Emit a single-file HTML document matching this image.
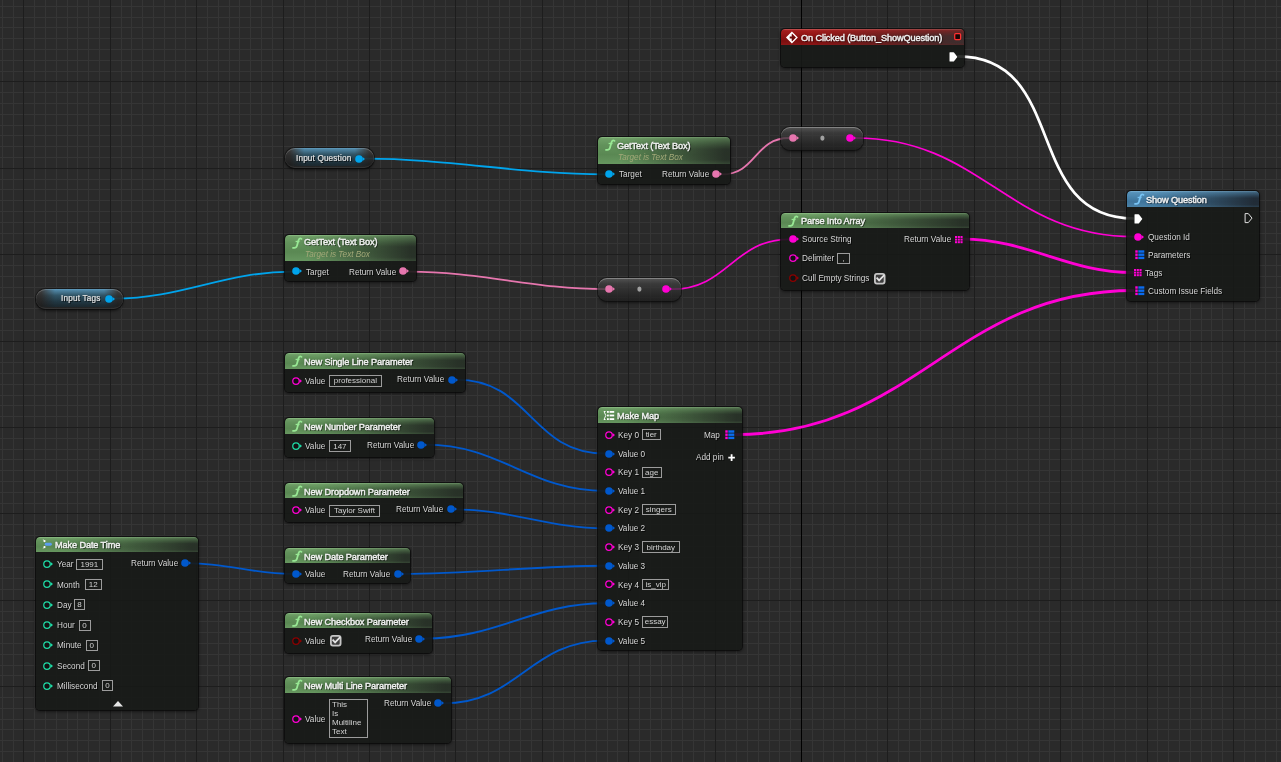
<!DOCTYPE html><html><head><meta charset="utf-8"><style>
html,body{margin:0;padding:0;background:#2a2a2a;width:1281px;height:762px;overflow:hidden;font-family:"Liberation Sans",sans-serif}
.abs{position:absolute;left:0;top:0;overflow:visible}
.t{position:absolute;white-space:nowrap;will-change:transform}
.node{position:absolute;border-radius:4px;background:rgba(23,25,23,.90);box-shadow:0 0 0 1px rgba(8,8,8,.7),0 1px 3px 1px rgba(0,0,0,.45);overflow:hidden}
.hd{position:absolute;left:0;top:0;right:0;border-radius:4px 4px 0 0;overflow:hidden}
.sh{position:absolute;left:0;top:0;right:0;bottom:0;-webkit-mask-image:linear-gradient(180deg,rgba(0,0,0,.35) 0%,#000 45%,#000 85%,rgba(0,0,0,.8) 100%)}
.pill{position:absolute;overflow:hidden;box-shadow:0 0 0 1px rgba(10,10,10,.55),0 2px 3px rgba(0,0,0,.55), inset 0 1px 0 rgba(255,255,255,.22), inset 0 -1px 0 rgba(255,255,255,.06)}
.var{background:linear-gradient(180deg,rgba(68,68,68,.92) 0%,rgba(44,44,44,.9) 40%,rgba(30,30,30,.9) 85%,rgba(40,40,40,.9) 100%)}
.band{position:absolute;left:6%;right:6%;top:0;bottom:2px;background:linear-gradient(180deg,rgba(90,160,200,.85) 0%,rgba(50,110,140,.6) 35%,rgba(30,75,98,.5) 70%,rgba(22,50,64,.45) 100%);-webkit-mask-image:linear-gradient(90deg,transparent 0%,#000 18%,#000 82%,transparent 100%);mask-image:linear-gradient(90deg,transparent 0%,#000 18%,#000 82%,transparent 100%)}
.conv{background:linear-gradient(180deg,rgba(92,92,92,.85) 0%,rgba(62,62,62,.78) 25%,rgba(38,38,38,.74) 75%,rgba(30,30,30,.78) 100%);box-shadow:0 0 0 1px rgba(10,10,10,.5),0 2px 3px rgba(0,0,0,.5), inset 0 1px 0 rgba(255,255,255,.28)}
.tb{position:absolute;box-sizing:border-box;border:1px solid #9c9c9c}
</style></head><body><svg class="abs" width="1281" height="762" viewBox="0 0 1281 762" shape-rendering="crispEdges"><path fill="#353535" d="M2 0h1v762h-1zM13 0h1v762h-1zM34 0h1v762h-1zM45 0h1v762h-1zM56 0h1v762h-1zM67 0h1v762h-1zM77 0h1v762h-1zM88 0h1v762h-1zM99 0h1v762h-1zM121 0h1v762h-1zM131 0h1v762h-1zM142 0h1v762h-1zM153 0h1v762h-1zM164 0h1v762h-1zM175 0h1v762h-1zM185 0h1v762h-1zM207 0h1v762h-1zM218 0h1v762h-1zM229 0h1v762h-1zM239 0h1v762h-1zM250 0h1v762h-1zM261 0h1v762h-1zM272 0h1v762h-1zM293 0h1v762h-1zM304 0h1v762h-1zM315 0h1v762h-1zM326 0h1v762h-1zM337 0h1v762h-1zM347 0h1v762h-1zM358 0h1v762h-1zM380 0h1v762h-1zM391 0h1v762h-1zM401 0h1v762h-1zM412 0h1v762h-1zM423 0h1v762h-1zM434 0h1v762h-1zM445 0h1v762h-1zM466 0h1v762h-1zM477 0h1v762h-1zM488 0h1v762h-1zM499 0h1v762h-1zM509 0h1v762h-1zM520 0h1v762h-1zM531 0h1v762h-1zM553 0h1v762h-1zM563 0h1v762h-1zM574 0h1v762h-1zM585 0h1v762h-1zM596 0h1v762h-1zM607 0h1v762h-1zM617 0h1v762h-1zM639 0h1v762h-1zM650 0h1v762h-1zM661 0h1v762h-1zM671 0h1v762h-1zM682 0h1v762h-1zM693 0h1v762h-1zM704 0h1v762h-1zM725 0h1v762h-1zM736 0h1v762h-1zM747 0h1v762h-1zM758 0h1v762h-1zM769 0h1v762h-1zM779 0h1v762h-1zM790 0h1v762h-1zM812 0h1v762h-1zM823 0h1v762h-1zM833 0h1v762h-1zM844 0h1v762h-1zM855 0h1v762h-1zM866 0h1v762h-1zM877 0h1v762h-1zM898 0h1v762h-1zM909 0h1v762h-1zM920 0h1v762h-1zM931 0h1v762h-1zM941 0h1v762h-1zM952 0h1v762h-1zM963 0h1v762h-1zM985 0h1v762h-1zM995 0h1v762h-1zM1006 0h1v762h-1zM1017 0h1v762h-1zM1028 0h1v762h-1zM1039 0h1v762h-1zM1049 0h1v762h-1zM1071 0h1v762h-1zM1082 0h1v762h-1zM1093 0h1v762h-1zM1103 0h1v762h-1zM1114 0h1v762h-1zM1125 0h1v762h-1zM1136 0h1v762h-1zM1157 0h1v762h-1zM1168 0h1v762h-1zM1179 0h1v762h-1zM1190 0h1v762h-1zM1201 0h1v762h-1zM1211 0h1v762h-1zM1222 0h1v762h-1zM1244 0h1v762h-1zM1255 0h1v762h-1zM1265 0h1v762h-1zM1276 0h1v762h-1zM0 6h1281v1h-1281zM0 17h1281v1h-1281zM0 27h1281v1h-1281zM0 38h1281v1h-1281zM0 49h1281v1h-1281zM0 60h1281v1h-1281zM0 71h1281v1h-1281zM0 92h1281v1h-1281zM0 103h1281v1h-1281zM0 114h1281v1h-1281zM0 125h1281v1h-1281zM0 135h1281v1h-1281zM0 146h1281v1h-1281zM0 157h1281v1h-1281zM0 179h1281v1h-1281zM0 189h1281v1h-1281zM0 200h1281v1h-1281zM0 211h1281v1h-1281zM0 222h1281v1h-1281zM0 233h1281v1h-1281zM0 243h1281v1h-1281zM0 265h1281v1h-1281zM0 276h1281v1h-1281zM0 287h1281v1h-1281zM0 297h1281v1h-1281zM0 308h1281v1h-1281zM0 319h1281v1h-1281zM0 330h1281v1h-1281zM0 351h1281v1h-1281zM0 362h1281v1h-1281zM0 373h1281v1h-1281zM0 384h1281v1h-1281zM0 395h1281v1h-1281zM0 405h1281v1h-1281zM0 416h1281v1h-1281zM0 438h1281v1h-1281zM0 449h1281v1h-1281zM0 459h1281v1h-1281zM0 470h1281v1h-1281zM0 481h1281v1h-1281zM0 492h1281v1h-1281zM0 503h1281v1h-1281zM0 524h1281v1h-1281zM0 535h1281v1h-1281zM0 546h1281v1h-1281zM0 557h1281v1h-1281zM0 567h1281v1h-1281zM0 578h1281v1h-1281zM0 589h1281v1h-1281zM0 611h1281v1h-1281zM0 621h1281v1h-1281zM0 632h1281v1h-1281zM0 643h1281v1h-1281zM0 654h1281v1h-1281zM0 665h1281v1h-1281zM0 675h1281v1h-1281zM0 697h1281v1h-1281zM0 708h1281v1h-1281zM0 719h1281v1h-1281zM0 729h1281v1h-1281zM0 740h1281v1h-1281zM0 751h1281v1h-1281z"/><path fill="#1d1d1d" d="M23 0h1v762h-1zM110 0h1v762h-1zM196 0h1v762h-1zM283 0h1v762h-1zM369 0h1v762h-1zM455 0h1v762h-1zM542 0h1v762h-1zM628 0h1v762h-1zM715 0h1v762h-1zM887 0h1v762h-1zM974 0h1v762h-1zM1060 0h1v762h-1zM1147 0h1v762h-1zM1233 0h1v762h-1zM0 81h1281v1h-1281zM0 168h1281v1h-1281zM0 254h1281v1h-1281zM0 341h1281v1h-1281zM0 427h1281v1h-1281zM0 513h1281v1h-1281zM0 600h1281v1h-1281zM0 686h1281v1h-1281z"/><path fill="#000" d="M801 0h1v762h-1z"/></svg><svg class="abs" width="1281" height="762" viewBox="0 0 1281 762"><path d="M957.5 56.4C1070.37 56.4 1021.13 218.5 1134 218.5" stroke="#ffffff" stroke-width="2.7" fill="none"/><path d="M364.5 158.6C449.93 158.6 519.57 174.4 605 174.4" stroke="#00a4ec" stroke-width="1.8" fill="none"/><path d="M722 174.4C756.47 174.4 754.53 138 789 138" stroke="#e676ae" stroke-width="1.8" fill="none"/><path d="M855.5 138C981.2 138 1008.3 236.6 1134 236.6" stroke="#ff00d4" stroke-width="1.7" fill="none"/><path d="M114 298.7C182.33 298.7 223.67 271.7 292 271.7" stroke="#00a4ec" stroke-width="1.8" fill="none"/><path d="M409 271.7C480.17 271.7 533.83 289.2 605 289.2" stroke="#e676ae" stroke-width="1.8" fill="none"/><path d="M672 289.2C727.6 289.2 733.4 239.4 789 239.4" stroke="#ff00d4" stroke-width="1.7" fill="none"/><path d="M962 239.2C1030.43 239.2 1065.57 272.5 1134 272.5" stroke="#ff00d4" stroke-width="2.8" fill="none"/><path d="M735 434.6C916.03 434.6 952.97 290.5 1134 290.5" stroke="#ff00d4" stroke-width="2.8" fill="none"/><path d="M456.5 379.6C530.64 379.6 530.86 453.51 605 453.51" stroke="#0058cc" stroke-width="1.9" fill="none"/><path d="M425.7 444.6C500.91 444.6 529.79 490.93 605 490.93" stroke="#0058cc" stroke-width="1.9" fill="none"/><path d="M454.8 509.4C511.18 509.4 548.62 528.35 605 528.35" stroke="#0058cc" stroke-width="1.9" fill="none"/><path d="M402 573.9C472.38 573.9 534.62 565.77 605 565.77" stroke="#0058cc" stroke-width="1.9" fill="none"/><path d="M424.6 638.5C496.5 638.5 533.1 603.19 605 603.19" stroke="#0058cc" stroke-width="1.9" fill="none"/><path d="M443.3 703.4C518.13 703.4 530.17 640.61 605 640.61" stroke="#0058cc" stroke-width="1.9" fill="none"/><path d="M189.6 563.4C227.23 563.4 254.37 573.9 292 573.9" stroke="#0058cc" stroke-width="1.9" fill="none"/></svg><div class="node" style="left:781px;top:29px;width:183px;height:38px"><div class="hd" style="height:16px;background:linear-gradient(180deg, rgba(240,150,150,.5) 0, rgba(240,150,150,0) 1.6px), linear-gradient(180deg,#a82020 0%,#931515 40%,#7c0f0f 75%,#8c1616 100%)"><div class="sh" style="background:linear-gradient(90deg,rgba(0,0,0,0) 18%,rgba(58,48,48,.92) 96%)"></div></div></div><svg class="abs" style="left:786.2px;top:32px" width="12" height="12" viewBox="0 0 12 12"><path d="M0.9 5.5L5.9 0.5L10.9 5.5L5.9 10.5Z" fill="none" stroke="#fff" stroke-width="1.35" stroke-linejoin="miter"/><path d="M0.9 5.5L5.9 0.5V10.5Z" fill="#fff"/><rect x="3.7" y="4.5" width="2.3" height="2" fill="#6e0c0c"/><path d="M5.8 2L9.3 5.5L5.8 9Z" fill="#6e0c0c"/></svg><div class="t" style="left:801.2px;top:33.81px;font-size:9.2px;line-height:9.2px;color:#f2f2f2;letter-spacing:-0.12px;-webkit-text-stroke:0.4px #f2f2f2;text-shadow:1px 1px 0 rgba(0,0,0,.55),0 0 3px rgba(0,0,0,.45);">On Clicked (Button_ShowQuestion)</div><svg class="abs" style="left:953.6px;top:32.8px" width="8" height="8" viewBox="0 0 8 8"><rect x="0.7" y="0.7" width="5.9" height="5.9" rx="1" fill="#1a0606" stroke="#ff3030" stroke-width="1.3"/></svg><svg class="abs" style="left:949px;top:51.5px" width="10" height="10" viewBox="0 0 10 10"><path d="M1 0.3H4.3Q4.7 0.3 5 0.6L8.1 4.5Q8.4 4.9 8.1 5.3L5 9.2Q4.7 9.5 4.3 9.5H1Q0.5 9.5 0.5 9V0.8Q0.5 0.3 1 0.3Z" fill="#fff"/></svg><div class="node" style="left:1127px;top:191px;width:132px;height:110px"><div class="hd" style="height:16px;background:linear-gradient(180deg, rgba(160,210,240,.5) 0, rgba(160,210,240,0) 1.6px), linear-gradient(180deg,#5b96bd 0%,#4b85ad 35%,#3f759c 65%,#4a82a8 100%)"><div class="sh" style="background:linear-gradient(90deg,rgba(0,0,0,0) 18%,rgba(30,36,44,.9) 96%)"></div></div></div><svg class="abs" style="left:1131px;top:191px" width="18" height="18" viewBox="0 0 18 18"><path d="M12.5 3.9C11.3 2.9 10.1 3.4 9.5 5.2L7.9 10.9C7.5 12.5 6.2 13.2 4.0 12.8" fill="none" stroke="#78c4f4" stroke-width="1.8" stroke-linecap="round"/><path d="M6.6 6.5H10.5" stroke="#78c4f4" stroke-width="1.3"/></svg><div class="t" style="left:1146px;top:196.01px;font-size:9.2px;line-height:9.2px;color:#f2f2f2;letter-spacing:-0.12px;-webkit-text-stroke:0.4px #f2f2f2;text-shadow:1px 1px 0 rgba(0,0,0,.55),0 0 3px rgba(0,0,0,.45);">Show Question</div><svg class="abs" style="left:1133.5px;top:213.5px" width="10" height="10" viewBox="0 0 10 10"><path d="M1 0.3H4.3Q4.7 0.3 5 0.6L8.1 4.5Q8.4 4.9 8.1 5.3L5 9.2Q4.7 9.5 4.3 9.5H1Q0.5 9.5 0.5 9V0.8Q0.5 0.3 1 0.3Z" fill="#fff"/></svg><svg class="abs" style="left:1244px;top:213px" width="10" height="10" viewBox="0 0 10 10"><path d="M1.1 0.6H4.3L8 5.1L4.3 9.6H1.1Z" fill="none" stroke="#e0e0e0" stroke-width="1.0" stroke-linejoin="round"/></svg><svg class="abs" style="left:1132.6px;top:231.6px" width="12" height="10" viewBox="0 0 12 10"><circle cx="5" cy="5" r="3.8" fill="#ff00d4"/><path d="M8.6 3L11 5L8.6 7Z" fill="#ff00d4"/></svg><div class="t" style="left:1148px;top:233.66px;font-size:8.2px;line-height:8.2px;color:#d6d6d6;text-shadow:1px 1px 0 rgba(0,0,0,.75);">Question Id</div><svg class="abs" style="left:1134.5px;top:249.8px" width="10" height="10" viewBox="0 0 10 10"><rect x="0.3" y="0.3" width="2.4" height="2.4" fill="#ff00d4"/><rect x="3.3" y="0.3" width="6" height="2.4" fill="#0a6cf0"/><rect x="0.3" y="3.5" width="2.4" height="2.4" fill="#ff00d4"/><rect x="3.3" y="3.5" width="6" height="2.4" fill="#0a6cf0"/><rect x="0.3" y="6.7" width="2.4" height="2.4" fill="#ff00d4"/><rect x="3.3" y="6.7" width="6" height="2.4" fill="#0a6cf0"/></svg><div class="t" style="left:1148px;top:251.56px;font-size:8.2px;line-height:8.2px;color:#d6d6d6;text-shadow:1px 1px 0 rgba(0,0,0,.75);">Parameters</div><svg class="abs" style="left:1133.8px;top:268.9px" width="9" height="8" viewBox="0 0 9 8"><rect x="0" y="0" width="2.1" height="2" fill="#ff00d4"/><rect x="2.75" y="0" width="2.1" height="2" fill="#ff00d4"/><rect x="5.5" y="0" width="2.1" height="2" fill="#ff00d4"/><rect x="0" y="2.6" width="2.1" height="2" fill="#ff00d4"/><rect x="2.75" y="2.6" width="2.1" height="2" fill="#ff00d4"/><rect x="5.5" y="2.6" width="2.1" height="2" fill="#ff00d4"/><rect x="0" y="5.2" width="2.1" height="2" fill="#ff00d4"/><rect x="2.75" y="5.2" width="2.1" height="2" fill="#ff00d4"/><rect x="5.5" y="5.2" width="2.1" height="2" fill="#ff00d4"/></svg><div class="t" style="left:1145px;top:269.56px;font-size:8.2px;line-height:8.2px;color:#d6d6d6;text-shadow:1px 1px 0 rgba(0,0,0,.75);">Tags</div><svg class="abs" style="left:1134.5px;top:286px" width="10" height="10" viewBox="0 0 10 10"><rect x="0.3" y="0.3" width="2.4" height="2.4" fill="#ff00d4"/><rect x="3.3" y="0.3" width="6" height="2.4" fill="#0a6cf0"/><rect x="0.3" y="3.5" width="2.4" height="2.4" fill="#ff00d4"/><rect x="3.3" y="3.5" width="6" height="2.4" fill="#0a6cf0"/><rect x="0.3" y="6.7" width="2.4" height="2.4" fill="#ff00d4"/><rect x="3.3" y="6.7" width="6" height="2.4" fill="#0a6cf0"/></svg><div class="t" style="left:1148px;top:287.56px;font-size:8.2px;line-height:8.2px;color:#d6d6d6;text-shadow:1px 1px 0 rgba(0,0,0,.75);">Custom Issue Fields</div><div class="pill var" style="left:285px;top:148px;width:89px;height:20.3px;border-radius:10.15px"><div class="band"></div></div><div class="t" style="left:296.2px;top:154.96px;font-size:8.2px;line-height:8.2px;color:#e2e2e2;letter-spacing:0.15px;text-shadow:1px 1px 0 rgba(0,0,0,.75);-webkit-text-stroke:0.2px #e2e2e2;">Input Question</div><svg class="abs" style="left:353.6px;top:153.6px" width="12" height="10" viewBox="0 0 12 10"><circle cx="5" cy="5" r="3.8" fill="#00a4ec"/><path d="M8.6 3L11 5L8.6 7Z" fill="#00a4ec"/></svg><div class="node" style="left:598px;top:137px;width:132px;height:47px"><div class="hd" style="height:27px;background:linear-gradient(180deg, rgba(170,220,160,.5) 0, rgba(170,220,160,0) 1.6px), linear-gradient(180deg,#72a26a 0%,#62925b 30%,#5a8853 65%,#679760 100%)"><div class="sh" style="background:linear-gradient(90deg,rgba(0,0,0,0) 18%,rgba(36,42,36,.92) 96%)"></div></div></div><svg class="abs" style="left:602px;top:137px" width="18" height="18" viewBox="0 0 18 18"><path d="M12.5 3.9C11.3 2.9 10.1 3.4 9.5 5.2L7.9 10.9C7.5 12.5 6.2 13.2 4.0 12.8" fill="none" stroke="#98e894" stroke-width="1.8" stroke-linecap="round"/><path d="M6.6 6.5H10.5" stroke="#98e894" stroke-width="1.3"/></svg><div class="t" style="left:617.2px;top:141.51px;font-size:9.2px;line-height:9.2px;color:#f2f2f2;letter-spacing:-0.12px;-webkit-text-stroke:0.4px #f2f2f2;text-shadow:1px 1px 0 rgba(0,0,0,.55),0 0 3px rgba(0,0,0,.45);">GetText (Text Box)</div><div class="t" style="left:618px;top:153.66px;font-size:8.2px;line-height:8.2px;color:#a2a878;font-style:italic;">Target is Text Box</div><svg class="abs" style="left:603.6px;top:169.4px" width="12" height="10" viewBox="0 0 12 10"><circle cx="5" cy="5" r="3.8" fill="#00a4ec"/><path d="M8.6 3L11 5L8.6 7Z" fill="#00a4ec"/></svg><div class="t" style="left:618.5px;top:171.46px;font-size:8.2px;line-height:8.2px;color:#d6d6d6;text-shadow:1px 1px 0 rgba(0,0,0,.75);">Target</div><div class="t" style="right:571.6px;top:171.46px;font-size:8.2px;line-height:8.2px;color:#d6d6d6;text-shadow:1px 1px 0 rgba(0,0,0,.75)">Return Value</div><svg class="abs" style="left:711px;top:169.4px" width="12" height="10" viewBox="0 0 12 10"><circle cx="5" cy="5" r="3.8" fill="#e676ae"/><path d="M8.6 3L11 5L8.6 7Z" fill="#e676ae"/></svg><div class="pill conv" style="left:781px;top:127px;width:82px;height:23px;border-radius:9px"></div><svg class="abs" style="left:788.2px;top:133px" width="12" height="10" viewBox="0 0 12 10"><circle cx="5" cy="5" r="3.8" fill="#e676ae"/><path d="M8.6 3L11 5L8.6 7Z" fill="#e676ae"/></svg><svg class="abs" style="left:819.6px;top:135px" width="5" height="6" viewBox="0 0 5 6"><ellipse cx="2.4" cy="3.1" rx="2.1" ry="2.6" fill="#a0a0a0"/></svg><svg class="abs" style="left:844.7px;top:133px" width="12" height="10" viewBox="0 0 12 10"><circle cx="5" cy="5" r="3.8" fill="#ff00d4"/><path d="M8.6 3L11 5L8.6 7Z" fill="#ff00d4"/></svg><div class="node" style="left:781px;top:213px;width:188px;height:77px"><div class="hd" style="height:15px;background:linear-gradient(180deg, rgba(170,220,160,.5) 0, rgba(170,220,160,0) 1.6px), linear-gradient(180deg,#72a26a 0%,#62925b 30%,#5a8853 65%,#679760 100%)"><div class="sh" style="background:linear-gradient(90deg,rgba(0,0,0,0) 18%,rgba(36,42,36,.92) 96%)"></div></div></div><svg class="abs" style="left:785px;top:213px" width="18" height="18" viewBox="0 0 18 18"><path d="M12.5 3.9C11.3 2.9 10.1 3.4 9.5 5.2L7.9 10.9C7.5 12.5 6.2 13.2 4.0 12.8" fill="none" stroke="#98e894" stroke-width="1.8" stroke-linecap="round"/><path d="M6.6 6.5H10.5" stroke="#98e894" stroke-width="1.3"/></svg><div class="t" style="left:801.1px;top:217.21px;font-size:9.2px;line-height:9.2px;color:#f2f2f2;letter-spacing:-0.12px;-webkit-text-stroke:0.4px #f2f2f2;text-shadow:1px 1px 0 rgba(0,0,0,.55),0 0 3px rgba(0,0,0,.45);">Parse Into Array</div><svg class="abs" style="left:787.5px;top:234.4px" width="12" height="10" viewBox="0 0 12 10"><circle cx="5" cy="5" r="3.8" fill="#ff00d4"/><path d="M8.6 3L11 5L8.6 7Z" fill="#ff00d4"/></svg><div class="t" style="left:802.3px;top:236.46px;font-size:8.2px;line-height:8.2px;color:#d6d6d6;text-shadow:1px 1px 0 rgba(0,0,0,.75);">Source String</div><div class="t" style="right:329.9px;top:236.46px;font-size:8.2px;line-height:8.2px;color:#d6d6d6;text-shadow:1px 1px 0 rgba(0,0,0,.75)">Return Value</div><svg class="abs" style="left:954.5px;top:235.5px" width="9" height="8" viewBox="0 0 9 8"><rect x="0" y="0" width="2.1" height="2" fill="#ff00d4"/><rect x="2.75" y="0" width="2.1" height="2" fill="#ff00d4"/><rect x="5.5" y="0" width="2.1" height="2" fill="#ff00d4"/><rect x="0" y="2.6" width="2.1" height="2" fill="#ff00d4"/><rect x="2.75" y="2.6" width="2.1" height="2" fill="#ff00d4"/><rect x="5.5" y="2.6" width="2.1" height="2" fill="#ff00d4"/><rect x="0" y="5.2" width="2.1" height="2" fill="#ff00d4"/><rect x="2.75" y="5.2" width="2.1" height="2" fill="#ff00d4"/><rect x="5.5" y="5.2" width="2.1" height="2" fill="#ff00d4"/></svg><svg class="abs" style="left:787.5px;top:252.8px" width="12" height="10" viewBox="0 0 12 10"><circle cx="5" cy="5" r="3.25" fill="#121212" stroke="#ff00d4" stroke-width="1.25"/><path d="M8.6 3L11 5L8.6 7Z" fill="#ff00d4"/></svg><div class="t" style="left:802.3px;top:254.86px;font-size:8.2px;line-height:8.2px;color:#d6d6d6;text-shadow:1px 1px 0 rgba(0,0,0,.75);">Delimiter</div><div class="tb" style="left:837px;top:252.5px;width:13px;height:11.2px"></div><div class="t" style="left:837px;width:13px;text-align:center;top:254.63px;font-size:8.0px;line-height:8.0px;color:#d2d2d2">,</div><svg class="abs" style="left:787.5px;top:273.4px" width="12" height="10" viewBox="0 0 12 10"><circle cx="5" cy="5" r="3.25" fill="#121212" stroke="#8c0000" stroke-width="1.25"/><path d="M8.6 3L11 5L8.6 7Z" fill="#8c0000"/></svg><div class="t" style="left:802.3px;top:275.46px;font-size:8.2px;line-height:8.2px;color:#d6d6d6;text-shadow:1px 1px 0 rgba(0,0,0,.75);">Cull Empty Strings</div><svg class="abs" style="left:874px;top:272.6px" width="11.5" height="11.5" viewBox="0 0 11.5 11.5"><rect x="0.9" y="0.9" width="9.7" height="9.7" rx="2" fill="#3e3e3e" stroke="#c6c6c6" stroke-width="1.8"/><path d="M2.6 4.6L5.1 7.4L10.2 2.1" fill="none" stroke="#e4e4e4" stroke-width="1.7"/></svg><div class="pill var" style="left:36px;top:289px;width:87.3px;height:19.5px;border-radius:9.75px"><div class="band"></div></div><div class="t" style="left:61.2px;top:295.16px;font-size:8.2px;line-height:8.2px;color:#e2e2e2;letter-spacing:0.2px;text-shadow:1px 1px 0 rgba(0,0,0,.75);-webkit-text-stroke:0.2px #e2e2e2;">Input Tags</div><svg class="abs" style="left:103.7px;top:293.7px" width="12" height="10" viewBox="0 0 12 10"><circle cx="5" cy="5" r="3.8" fill="#00a4ec"/><path d="M8.6 3L11 5L8.6 7Z" fill="#00a4ec"/></svg><div class="node" style="left:285px;top:235px;width:131px;height:46px"><div class="hd" style="height:26px;background:linear-gradient(180deg, rgba(170,220,160,.5) 0, rgba(170,220,160,0) 1.6px), linear-gradient(180deg,#72a26a 0%,#62925b 30%,#5a8853 65%,#679760 100%)"><div class="sh" style="background:linear-gradient(90deg,rgba(0,0,0,0) 18%,rgba(36,42,36,.92) 96%)"></div></div></div><svg class="abs" style="left:289px;top:235px" width="18" height="18" viewBox="0 0 18 18"><path d="M12.5 3.9C11.3 2.9 10.1 3.4 9.5 5.2L7.9 10.9C7.5 12.5 6.2 13.2 4.0 12.8" fill="none" stroke="#98e894" stroke-width="1.8" stroke-linecap="round"/><path d="M6.6 6.5H10.5" stroke="#98e894" stroke-width="1.3"/></svg><div class="t" style="left:304.3px;top:238.41px;font-size:9.2px;line-height:9.2px;color:#f2f2f2;letter-spacing:-0.12px;-webkit-text-stroke:0.4px #f2f2f2;text-shadow:1px 1px 0 rgba(0,0,0,.55),0 0 3px rgba(0,0,0,.45);">GetText (Text Box)</div><div class="t" style="left:305px;top:250.56px;font-size:8.2px;line-height:8.2px;color:#a2a878;font-style:italic;">Target is Text Box</div><svg class="abs" style="left:290.8px;top:266.4px" width="12" height="10" viewBox="0 0 12 10"><circle cx="5" cy="5" r="3.8" fill="#00a4ec"/><path d="M8.6 3L11 5L8.6 7Z" fill="#00a4ec"/></svg><div class="t" style="left:305.7px;top:268.76px;font-size:8.2px;line-height:8.2px;color:#d6d6d6;text-shadow:1px 1px 0 rgba(0,0,0,.75);">Target</div><div class="t" style="right:885.2px;top:268.76px;font-size:8.2px;line-height:8.2px;color:#d6d6d6;text-shadow:1px 1px 0 rgba(0,0,0,.75)">Return Value</div><svg class="abs" style="left:397.9px;top:266.4px" width="12" height="10" viewBox="0 0 12 10"><circle cx="5" cy="5" r="3.8" fill="#e676ae"/><path d="M8.6 3L11 5L8.6 7Z" fill="#e676ae"/></svg><div class="pill conv" style="left:598px;top:278px;width:82.5px;height:23px;border-radius:9px"></div><svg class="abs" style="left:603.6px;top:284.2px" width="12" height="10" viewBox="0 0 12 10"><circle cx="5" cy="5" r="3.8" fill="#e676ae"/><path d="M8.6 3L11 5L8.6 7Z" fill="#e676ae"/></svg><svg class="abs" style="left:636.6px;top:286px" width="5" height="6" viewBox="0 0 5 6"><ellipse cx="2.4" cy="3.1" rx="2.1" ry="2.6" fill="#a0a0a0"/></svg><svg class="abs" style="left:661px;top:284.2px" width="12" height="10" viewBox="0 0 12 10"><circle cx="5" cy="5" r="3.8" fill="#ff00d4"/><path d="M8.6 3L11 5L8.6 7Z" fill="#ff00d4"/></svg><div class="node" style="left:285px;top:353px;width:180px;height:39px"><div class="hd" style="height:16px;background:linear-gradient(180deg, rgba(170,220,160,.5) 0, rgba(170,220,160,0) 1.6px), linear-gradient(180deg,#72a26a 0%,#62925b 30%,#5a8853 65%,#679760 100%)"><div class="sh" style="background:linear-gradient(90deg,rgba(0,0,0,0) 18%,rgba(36,42,36,.92) 96%)"></div></div></div><svg class="abs" style="left:289px;top:353px" width="18" height="18" viewBox="0 0 18 18"><path d="M12.5 3.9C11.3 2.9 10.1 3.4 9.5 5.2L7.9 10.9C7.5 12.5 6.2 13.2 4.0 12.8" fill="none" stroke="#98e894" stroke-width="1.8" stroke-linecap="round"/><path d="M6.6 6.5H10.5" stroke="#98e894" stroke-width="1.3"/></svg><div class="t" style="left:303.9px;top:357.91px;font-size:9.2px;line-height:9.2px;color:#f2f2f2;letter-spacing:-0.12px;-webkit-text-stroke:0.4px #f2f2f2;text-shadow:1px 1px 0 rgba(0,0,0,.55),0 0 3px rgba(0,0,0,.45);">New Single Line Parameter</div><svg class="abs" style="left:291px;top:376px" width="12" height="10" viewBox="0 0 12 10"><circle cx="5" cy="5" r="3.25" fill="#121212" stroke="#ff00d4" stroke-width="1.25"/><path d="M8.6 3L11 5L8.6 7Z" fill="#ff00d4"/></svg><div class="t" style="left:305.2px;top:378.06px;font-size:8.2px;line-height:8.2px;color:#d6d6d6;text-shadow:1px 1px 0 rgba(0,0,0,.75);">Value</div><div class="tb" style="left:329.1px;top:375.2px;width:52.8px;height:11.5px"></div><div class="t" style="left:329.1px;width:52.8px;text-align:center;top:377.48px;font-size:8.0px;line-height:8.0px;color:#d2d2d2">professional</div><div class="t" style="right:836.4px;top:376.46px;font-size:8.2px;line-height:8.2px;color:#d6d6d6;text-shadow:1px 1px 0 rgba(0,0,0,.75)">Return Value</div><svg class="abs" style="left:447px;top:374.6px" width="12" height="10" viewBox="0 0 12 10"><circle cx="5" cy="5" r="3.8" fill="#0058cc"/><path d="M8.6 3L11 5L8.6 7Z" fill="#0058cc"/></svg><div class="node" style="left:285px;top:418px;width:149.3px;height:39px"><div class="hd" style="height:16px;background:linear-gradient(180deg, rgba(170,220,160,.5) 0, rgba(170,220,160,0) 1.6px), linear-gradient(180deg,#72a26a 0%,#62925b 30%,#5a8853 65%,#679760 100%)"><div class="sh" style="background:linear-gradient(90deg,rgba(0,0,0,0) 18%,rgba(36,42,36,.92) 96%)"></div></div></div><svg class="abs" style="left:289px;top:418px" width="18" height="18" viewBox="0 0 18 18"><path d="M12.5 3.9C11.3 2.9 10.1 3.4 9.5 5.2L7.9 10.9C7.5 12.5 6.2 13.2 4.0 12.8" fill="none" stroke="#98e894" stroke-width="1.8" stroke-linecap="round"/><path d="M6.6 6.5H10.5" stroke="#98e894" stroke-width="1.3"/></svg><div class="t" style="left:303.9px;top:422.91px;font-size:9.2px;line-height:9.2px;color:#f2f2f2;letter-spacing:-0.12px;-webkit-text-stroke:0.4px #f2f2f2;text-shadow:1px 1px 0 rgba(0,0,0,.55),0 0 3px rgba(0,0,0,.45);">New Number Parameter</div><svg class="abs" style="left:291px;top:440.5px" width="12" height="10" viewBox="0 0 12 10"><circle cx="5" cy="5" r="3.25" fill="#121212" stroke="#1fdca6" stroke-width="1.25"/><path d="M8.6 3L11 5L8.6 7Z" fill="#1fdca6"/></svg><div class="t" style="left:305.2px;top:442.56px;font-size:8.2px;line-height:8.2px;color:#d6d6d6;text-shadow:1px 1px 0 rgba(0,0,0,.75);">Value</div><div class="tb" style="left:329.1px;top:440.3px;width:21.8px;height:11.5px"></div><div class="t" style="left:329.1px;width:21.8px;text-align:center;top:442.58px;font-size:8.0px;line-height:8.0px;color:#d2d2d2">147</div><div class="t" style="right:866.8px;top:441.66px;font-size:8.2px;line-height:8.2px;color:#d6d6d6;text-shadow:1px 1px 0 rgba(0,0,0,.75)">Return Value</div><svg class="abs" style="left:416.3px;top:439.6px" width="12" height="10" viewBox="0 0 12 10"><circle cx="5" cy="5" r="3.8" fill="#0058cc"/><path d="M8.6 3L11 5L8.6 7Z" fill="#0058cc"/></svg><div class="node" style="left:285px;top:483px;width:178.1px;height:39px"><div class="hd" style="height:15px;background:linear-gradient(180deg, rgba(170,220,160,.5) 0, rgba(170,220,160,0) 1.6px), linear-gradient(180deg,#72a26a 0%,#62925b 30%,#5a8853 65%,#679760 100%)"><div class="sh" style="background:linear-gradient(90deg,rgba(0,0,0,0) 18%,rgba(36,42,36,.92) 96%)"></div></div></div><svg class="abs" style="left:289px;top:483px" width="18" height="18" viewBox="0 0 18 18"><path d="M12.5 3.9C11.3 2.9 10.1 3.4 9.5 5.2L7.9 10.9C7.5 12.5 6.2 13.2 4.0 12.8" fill="none" stroke="#98e894" stroke-width="1.8" stroke-linecap="round"/><path d="M6.6 6.5H10.5" stroke="#98e894" stroke-width="1.3"/></svg><div class="t" style="left:303.9px;top:487.91px;font-size:9.2px;line-height:9.2px;color:#f2f2f2;letter-spacing:-0.12px;-webkit-text-stroke:0.4px #f2f2f2;text-shadow:1px 1px 0 rgba(0,0,0,.55),0 0 3px rgba(0,0,0,.45);">New Dropdown Parameter</div><svg class="abs" style="left:291px;top:505px" width="12" height="10" viewBox="0 0 12 10"><circle cx="5" cy="5" r="3.25" fill="#121212" stroke="#ff00d4" stroke-width="1.25"/><path d="M8.6 3L11 5L8.6 7Z" fill="#ff00d4"/></svg><div class="t" style="left:305.2px;top:507.06px;font-size:8.2px;line-height:8.2px;color:#d6d6d6;text-shadow:1px 1px 0 rgba(0,0,0,.75);">Value</div><div class="tb" style="left:329.1px;top:505.2px;width:50.9px;height:11.5px"></div><div class="t" style="left:329.1px;width:50.9px;text-align:center;top:507.48px;font-size:8.0px;line-height:8.0px;color:#d2d2d2">Taylor Swift</div><div class="t" style="right:838px;top:506.46px;font-size:8.2px;line-height:8.2px;color:#d6d6d6;text-shadow:1px 1px 0 rgba(0,0,0,.75)">Return Value</div><svg class="abs" style="left:445.5px;top:504.4px" width="12" height="10" viewBox="0 0 12 10"><circle cx="5" cy="5" r="3.8" fill="#0058cc"/><path d="M8.6 3L11 5L8.6 7Z" fill="#0058cc"/></svg><div class="node" style="left:285px;top:548px;width:125px;height:35px"><div class="hd" style="height:15px;background:linear-gradient(180deg, rgba(170,220,160,.5) 0, rgba(170,220,160,0) 1.6px), linear-gradient(180deg,#72a26a 0%,#62925b 30%,#5a8853 65%,#679760 100%)"><div class="sh" style="background:linear-gradient(90deg,rgba(0,0,0,0) 18%,rgba(36,42,36,.92) 96%)"></div></div></div><svg class="abs" style="left:289px;top:548px" width="18" height="18" viewBox="0 0 18 18"><path d="M12.5 3.9C11.3 2.9 10.1 3.4 9.5 5.2L7.9 10.9C7.5 12.5 6.2 13.2 4.0 12.8" fill="none" stroke="#98e894" stroke-width="1.8" stroke-linecap="round"/><path d="M6.6 6.5H10.5" stroke="#98e894" stroke-width="1.3"/></svg><div class="t" style="left:303.9px;top:552.91px;font-size:9.2px;line-height:9.2px;color:#f2f2f2;letter-spacing:-0.12px;-webkit-text-stroke:0.4px #f2f2f2;text-shadow:1px 1px 0 rgba(0,0,0,.55),0 0 3px rgba(0,0,0,.45);">New Date Parameter</div><svg class="abs" style="left:291px;top:568.9px" width="12" height="10" viewBox="0 0 12 10"><circle cx="5" cy="5" r="3.8" fill="#0058cc"/><path d="M8.6 3L11 5L8.6 7Z" fill="#0058cc"/></svg><div class="t" style="left:305.2px;top:570.96px;font-size:8.2px;line-height:8.2px;color:#d6d6d6;text-shadow:1px 1px 0 rgba(0,0,0,.75);">Value</div><div class="t" style="right:891.1px;top:570.96px;font-size:8.2px;line-height:8.2px;color:#d6d6d6;text-shadow:1px 1px 0 rgba(0,0,0,.75)">Return Value</div><svg class="abs" style="left:392.5px;top:568.9px" width="12" height="10" viewBox="0 0 12 10"><circle cx="5" cy="5" r="3.8" fill="#0058cc"/><path d="M8.6 3L11 5L8.6 7Z" fill="#0058cc"/></svg><div class="node" style="left:285px;top:613px;width:147.2px;height:40px"><div class="hd" style="height:15px;background:linear-gradient(180deg, rgba(170,220,160,.5) 0, rgba(170,220,160,0) 1.6px), linear-gradient(180deg,#72a26a 0%,#62925b 30%,#5a8853 65%,#679760 100%)"><div class="sh" style="background:linear-gradient(90deg,rgba(0,0,0,0) 18%,rgba(36,42,36,.92) 96%)"></div></div></div><svg class="abs" style="left:289px;top:613px" width="18" height="18" viewBox="0 0 18 18"><path d="M12.5 3.9C11.3 2.9 10.1 3.4 9.5 5.2L7.9 10.9C7.5 12.5 6.2 13.2 4.0 12.8" fill="none" stroke="#98e894" stroke-width="1.8" stroke-linecap="round"/><path d="M6.6 6.5H10.5" stroke="#98e894" stroke-width="1.3"/></svg><div class="t" style="left:303.9px;top:617.91px;font-size:9.2px;line-height:9.2px;color:#f2f2f2;letter-spacing:-0.12px;-webkit-text-stroke:0.4px #f2f2f2;text-shadow:1px 1px 0 rgba(0,0,0,.55),0 0 3px rgba(0,0,0,.45);">New Checkbox Parameter</div><svg class="abs" style="left:291px;top:635.6px" width="12" height="10" viewBox="0 0 12 10"><circle cx="5" cy="5" r="3.25" fill="#121212" stroke="#8c0000" stroke-width="1.25"/><path d="M8.6 3L11 5L8.6 7Z" fill="#8c0000"/></svg><div class="t" style="left:305.1px;top:637.66px;font-size:8.2px;line-height:8.2px;color:#d6d6d6;text-shadow:1px 1px 0 rgba(0,0,0,.75);">Value</div><svg class="abs" style="left:329.9px;top:635.2px" width="11.5" height="11.5" viewBox="0 0 11.5 11.5"><rect x="0.9" y="0.9" width="9.7" height="9.7" rx="2" fill="#3e3e3e" stroke="#c6c6c6" stroke-width="1.8"/><path d="M2.6 4.6L5.1 7.4L10.2 2.1" fill="none" stroke="#e4e4e4" stroke-width="1.7"/></svg><div class="t" style="right:869.1px;top:635.56px;font-size:8.2px;line-height:8.2px;color:#d6d6d6;text-shadow:1px 1px 0 rgba(0,0,0,.75)">Return Value</div><svg class="abs" style="left:414.3px;top:633.5px" width="12" height="10" viewBox="0 0 12 10"><circle cx="5" cy="5" r="3.8" fill="#0058cc"/><path d="M8.6 3L11 5L8.6 7Z" fill="#0058cc"/></svg><div class="node" style="left:285px;top:677px;width:166.3px;height:66px"><div class="hd" style="height:16px;background:linear-gradient(180deg, rgba(170,220,160,.5) 0, rgba(170,220,160,0) 1.6px), linear-gradient(180deg,#72a26a 0%,#62925b 30%,#5a8853 65%,#679760 100%)"><div class="sh" style="background:linear-gradient(90deg,rgba(0,0,0,0) 18%,rgba(36,42,36,.92) 96%)"></div></div></div><svg class="abs" style="left:289px;top:677px" width="18" height="18" viewBox="0 0 18 18"><path d="M12.5 3.9C11.3 2.9 10.1 3.4 9.5 5.2L7.9 10.9C7.5 12.5 6.2 13.2 4.0 12.8" fill="none" stroke="#98e894" stroke-width="1.8" stroke-linecap="round"/><path d="M6.6 6.5H10.5" stroke="#98e894" stroke-width="1.3"/></svg><div class="t" style="left:303.9px;top:681.91px;font-size:9.2px;line-height:9.2px;color:#f2f2f2;letter-spacing:-0.12px;-webkit-text-stroke:0.4px #f2f2f2;text-shadow:1px 1px 0 rgba(0,0,0,.55),0 0 3px rgba(0,0,0,.45);">New Multi Line Parameter</div><svg class="abs" style="left:291px;top:713.6px" width="12" height="10" viewBox="0 0 12 10"><circle cx="5" cy="5" r="3.25" fill="#121212" stroke="#ff00d4" stroke-width="1.25"/><path d="M8.6 3L11 5L8.6 7Z" fill="#ff00d4"/></svg><div class="t" style="left:305.1px;top:715.66px;font-size:8.2px;line-height:8.2px;color:#d6d6d6;text-shadow:1px 1px 0 rgba(0,0,0,.75);">Value</div><div class="tb" style="left:329.1px;top:699.2px;width:38.8px;height:38.4px"></div><div class="t" style="left:332.1px;top:701.03px;font-size:8px;line-height:8px;color:#d2d2d2;">This</div><div class="t" style="left:332.1px;top:710.13px;font-size:8px;line-height:8px;color:#d2d2d2;">Is</div><div class="t" style="left:332.1px;top:719.23px;font-size:8px;line-height:8px;color:#d2d2d2;">Multiline</div><div class="t" style="left:332.1px;top:728.33px;font-size:8px;line-height:8px;color:#d2d2d2;">Text</div><div class="t" style="right:849.7px;top:700.46px;font-size:8.2px;line-height:8.2px;color:#d6d6d6;text-shadow:1px 1px 0 rgba(0,0,0,.75)">Return Value</div><svg class="abs" style="left:433.3px;top:698.4px" width="12" height="10" viewBox="0 0 12 10"><circle cx="5" cy="5" r="3.8" fill="#0058cc"/><path d="M8.6 3L11 5L8.6 7Z" fill="#0058cc"/></svg><div class="node" style="left:36px;top:537px;width:162.3px;height:172.5px"><div class="hd" style="height:15px;background:linear-gradient(180deg, rgba(170,220,160,.5) 0, rgba(170,220,160,0) 1.6px), linear-gradient(180deg,#72a26a 0%,#62925b 30%,#5a8853 65%,#679760 100%)"><div class="sh" style="background:linear-gradient(90deg,rgba(0,0,0,0) 18%,rgba(36,42,36,.92) 96%)"></div></div></div><svg class="abs" style="left:41px;top:538px" width="12" height="12" viewBox="0 0 12 12"><path d="M2.2 1.4L3.6 3.1M2.2 10.6L3.6 8.9" stroke="#ddd" stroke-width="0.9"/><circle cx="3.5" cy="3.1" r="1.1" fill="#fff"/><circle cx="3.5" cy="9.1" r="1.1" fill="#fff"/><rect x="3.8" y="4.8" width="7" height="2.9" rx="1.4" fill="#5b9cf0"/></svg><div class="t" style="left:55px;top:540.71px;font-size:9.2px;line-height:9.2px;color:#f2f2f2;letter-spacing:-0.12px;-webkit-text-stroke:0.4px #f2f2f2;text-shadow:1px 1px 0 rgba(0,0,0,.55),0 0 3px rgba(0,0,0,.45);">Make Date Time</div><svg class="abs" style="left:42.3px;top:559.2px" width="12" height="10" viewBox="0 0 12 10"><circle cx="5" cy="5" r="3.25" fill="#121212" stroke="#1fdca6" stroke-width="1.25"/><path d="M8.6 3L11 5L8.6 7Z" fill="#1fdca6"/></svg><div class="t" style="left:56.9px;top:561.26px;font-size:8.2px;line-height:8.2px;color:#d6d6d6;text-shadow:1px 1px 0 rgba(0,0,0,.75);">Year</div><div class="tb" style="left:76.1px;top:558.7px;width:26.7px;height:11px"></div><div class="t" style="left:76.1px;width:26.7px;text-align:center;top:560.73px;font-size:8.0px;line-height:8.0px;color:#d2d2d2">1991</div><svg class="abs" style="left:42.3px;top:579.47px" width="12" height="10" viewBox="0 0 12 10"><circle cx="5" cy="5" r="3.25" fill="#121212" stroke="#1fdca6" stroke-width="1.25"/><path d="M8.6 3L11 5L8.6 7Z" fill="#1fdca6"/></svg><div class="t" style="left:56.9px;top:581.53px;font-size:8.2px;line-height:8.2px;color:#d6d6d6;text-shadow:1px 1px 0 rgba(0,0,0,.75);">Month</div><div class="tb" style="left:85.3px;top:578.97px;width:16.5px;height:11px"></div><div class="t" style="left:85.3px;width:16.5px;text-align:center;top:581px;font-size:8.0px;line-height:8.0px;color:#d2d2d2">12</div><svg class="abs" style="left:42.3px;top:599.74px" width="12" height="10" viewBox="0 0 12 10"><circle cx="5" cy="5" r="3.25" fill="#121212" stroke="#1fdca6" stroke-width="1.25"/><path d="M8.6 3L11 5L8.6 7Z" fill="#1fdca6"/></svg><div class="t" style="left:56.9px;top:601.8px;font-size:8.2px;line-height:8.2px;color:#d6d6d6;text-shadow:1px 1px 0 rgba(0,0,0,.75);">Day</div><div class="tb" style="left:73.6px;top:599.24px;width:11.2px;height:11px"></div><div class="t" style="left:73.6px;width:11.2px;text-align:center;top:601.27px;font-size:8.0px;line-height:8.0px;color:#d2d2d2">8</div><svg class="abs" style="left:42.3px;top:620.01px" width="12" height="10" viewBox="0 0 12 10"><circle cx="5" cy="5" r="3.25" fill="#121212" stroke="#1fdca6" stroke-width="1.25"/><path d="M8.6 3L11 5L8.6 7Z" fill="#1fdca6"/></svg><div class="t" style="left:56.9px;top:622.07px;font-size:8.2px;line-height:8.2px;color:#d6d6d6;text-shadow:1px 1px 0 rgba(0,0,0,.75);">Hour</div><div class="tb" style="left:79.4px;top:619.51px;width:11.2px;height:11px"></div><div class="t" style="left:79.4px;width:11.2px;text-align:center;top:621.54px;font-size:8.0px;line-height:8.0px;color:#d2d2d2">0</div><svg class="abs" style="left:42.3px;top:640.28px" width="12" height="10" viewBox="0 0 12 10"><circle cx="5" cy="5" r="3.25" fill="#121212" stroke="#1fdca6" stroke-width="1.25"/><path d="M8.6 3L11 5L8.6 7Z" fill="#1fdca6"/></svg><div class="t" style="left:56.9px;top:642.34px;font-size:8.2px;line-height:8.2px;color:#d6d6d6;text-shadow:1px 1px 0 rgba(0,0,0,.75);">Minute</div><div class="tb" style="left:86.3px;top:639.78px;width:11.3px;height:11px"></div><div class="t" style="left:86.3px;width:11.3px;text-align:center;top:641.81px;font-size:8.0px;line-height:8.0px;color:#d2d2d2">0</div><svg class="abs" style="left:42.3px;top:660.55px" width="12" height="10" viewBox="0 0 12 10"><circle cx="5" cy="5" r="3.25" fill="#121212" stroke="#1fdca6" stroke-width="1.25"/><path d="M8.6 3L11 5L8.6 7Z" fill="#1fdca6"/></svg><div class="t" style="left:56.9px;top:662.61px;font-size:8.2px;line-height:8.2px;color:#d6d6d6;text-shadow:1px 1px 0 rgba(0,0,0,.75);">Second</div><div class="tb" style="left:88.1px;top:660.05px;width:11.7px;height:11px"></div><div class="t" style="left:88.1px;width:11.7px;text-align:center;top:662.08px;font-size:8.0px;line-height:8.0px;color:#d2d2d2">0</div><svg class="abs" style="left:42.3px;top:680.82px" width="12" height="10" viewBox="0 0 12 10"><circle cx="5" cy="5" r="3.25" fill="#121212" stroke="#1fdca6" stroke-width="1.25"/><path d="M8.6 3L11 5L8.6 7Z" fill="#1fdca6"/></svg><div class="t" style="left:56.9px;top:682.88px;font-size:8.2px;line-height:8.2px;color:#d6d6d6;text-shadow:1px 1px 0 rgba(0,0,0,.75);">Millisecond</div><div class="tb" style="left:102.3px;top:680.32px;width:11.2px;height:11px"></div><div class="t" style="left:102.3px;width:11.2px;text-align:center;top:682.35px;font-size:8.0px;line-height:8.0px;color:#d2d2d2">0</div><div class="t" style="right:1102.7px;top:559.96px;font-size:8.2px;line-height:8.2px;color:#d6d6d6;text-shadow:1px 1px 0 rgba(0,0,0,.75)">Return Value</div><svg class="abs" style="left:180.2px;top:558.2px" width="12" height="10" viewBox="0 0 12 10"><circle cx="5" cy="5" r="3.8" fill="#0058cc"/><path d="M8.6 3L11 5L8.6 7Z" fill="#0058cc"/></svg><svg class="abs" style="left:111.5px;top:700px" width="12" height="7" viewBox="0 0 12 7"><path d="M1 6.5L6 1L11 6.5Z" fill="#e6e6e6"/></svg><div class="node" style="left:598px;top:407px;width:144.4px;height:243.3px"><div class="hd" style="height:16px;background:linear-gradient(180deg, rgba(170,220,160,.5) 0, rgba(170,220,160,0) 1.6px), linear-gradient(180deg,#72a26a 0%,#62925b 30%,#5a8853 65%,#679760 100%)"><div class="sh" style="background:linear-gradient(90deg,rgba(0,0,0,0) 18%,rgba(36,42,36,.92) 96%)"></div></div></div><svg class="abs" style="left:603.2px;top:410px" width="12" height="11" viewBox="0 0 12 11"><path d="M1 1.5h1.5M1 9.5h1.5" stroke="#fff" stroke-width="1"/><path d="M1 1.5L2.8 5.5L1 9.5" fill="none" stroke="#fff" stroke-width="0.9"/><rect x="4" y="1" width="1.8" height="1.8" fill="#fff"/><rect x="4" y="4.6" width="1.8" height="1.8" fill="#fff"/><rect x="4" y="8.2" width="1.8" height="1.8" fill="#fff"/><rect x="6.6" y="1" width="4.6" height="1.8" fill="#fff"/><rect x="6.6" y="4.6" width="4.6" height="1.8" fill="#fff"/><rect x="6.6" y="8.2" width="4.6" height="1.8" fill="#fff"/></svg><div class="t" style="left:617.1px;top:411.51px;font-size:9.2px;line-height:9.2px;color:#f2f2f2;letter-spacing:-0.12px;-webkit-text-stroke:0.4px #f2f2f2;text-shadow:1px 1px 0 rgba(0,0,0,.55),0 0 3px rgba(0,0,0,.45);">Make Map</div><svg class="abs" style="left:603.9px;top:429.8px" width="12" height="10" viewBox="0 0 12 10"><circle cx="5" cy="5" r="3.25" fill="#121212" stroke="#ff00d4" stroke-width="1.25"/><path d="M8.6 3L11 5L8.6 7Z" fill="#ff00d4"/></svg><div class="t" style="left:618px;top:431.86px;font-size:8.2px;line-height:8.2px;color:#d6d6d6;text-shadow:1px 1px 0 rgba(0,0,0,.75);">Key 0</div><div class="tb" style="left:642.2px;top:429.1px;width:18.4px;height:11.4px"></div><div class="t" style="left:642.2px;width:18.4px;text-align:center;top:431.33px;font-size:8.0px;line-height:8.0px;color:#d2d2d2">tier</div><svg class="abs" style="left:603.9px;top:448.51px" width="12" height="10" viewBox="0 0 12 10"><circle cx="5" cy="5" r="3.8" fill="#0058cc"/><path d="M8.6 3L11 5L8.6 7Z" fill="#0058cc"/></svg><div class="t" style="left:618px;top:450.57px;font-size:8.2px;line-height:8.2px;color:#d6d6d6;text-shadow:1px 1px 0 rgba(0,0,0,.75);">Value 0</div><svg class="abs" style="left:603.9px;top:467.22px" width="12" height="10" viewBox="0 0 12 10"><circle cx="5" cy="5" r="3.25" fill="#121212" stroke="#ff00d4" stroke-width="1.25"/><path d="M8.6 3L11 5L8.6 7Z" fill="#ff00d4"/></svg><div class="t" style="left:618px;top:469.28px;font-size:8.2px;line-height:8.2px;color:#d6d6d6;text-shadow:1px 1px 0 rgba(0,0,0,.75);">Key 1</div><div class="tb" style="left:642.2px;top:466.52px;width:19.5px;height:11.4px"></div><div class="t" style="left:642.2px;width:19.5px;text-align:center;top:468.75px;font-size:8.0px;line-height:8.0px;color:#d2d2d2">age</div><svg class="abs" style="left:603.9px;top:485.93px" width="12" height="10" viewBox="0 0 12 10"><circle cx="5" cy="5" r="3.8" fill="#0058cc"/><path d="M8.6 3L11 5L8.6 7Z" fill="#0058cc"/></svg><div class="t" style="left:618px;top:487.99px;font-size:8.2px;line-height:8.2px;color:#d6d6d6;text-shadow:1px 1px 0 rgba(0,0,0,.75);">Value 1</div><svg class="abs" style="left:603.9px;top:504.64px" width="12" height="10" viewBox="0 0 12 10"><circle cx="5" cy="5" r="3.25" fill="#121212" stroke="#ff00d4" stroke-width="1.25"/><path d="M8.6 3L11 5L8.6 7Z" fill="#ff00d4"/></svg><div class="t" style="left:618px;top:506.7px;font-size:8.2px;line-height:8.2px;color:#d6d6d6;text-shadow:1px 1px 0 rgba(0,0,0,.75);">Key 2</div><div class="tb" style="left:642.2px;top:503.94px;width:33.5px;height:11.4px"></div><div class="t" style="left:642.2px;width:33.5px;text-align:center;top:506.17px;font-size:8.0px;line-height:8.0px;color:#d2d2d2">singers</div><svg class="abs" style="left:603.9px;top:523.35px" width="12" height="10" viewBox="0 0 12 10"><circle cx="5" cy="5" r="3.8" fill="#0058cc"/><path d="M8.6 3L11 5L8.6 7Z" fill="#0058cc"/></svg><div class="t" style="left:618px;top:525.41px;font-size:8.2px;line-height:8.2px;color:#d6d6d6;text-shadow:1px 1px 0 rgba(0,0,0,.75);">Value 2</div><svg class="abs" style="left:603.9px;top:542.06px" width="12" height="10" viewBox="0 0 12 10"><circle cx="5" cy="5" r="3.25" fill="#121212" stroke="#ff00d4" stroke-width="1.25"/><path d="M8.6 3L11 5L8.6 7Z" fill="#ff00d4"/></svg><div class="t" style="left:618px;top:544.12px;font-size:8.2px;line-height:8.2px;color:#d6d6d6;text-shadow:1px 1px 0 rgba(0,0,0,.75);">Key 3</div><div class="tb" style="left:642.2px;top:541.36px;width:37.6px;height:11.4px"></div><div class="t" style="left:642.2px;width:37.6px;text-align:center;top:543.59px;font-size:8.0px;line-height:8.0px;color:#d2d2d2">birthday</div><svg class="abs" style="left:603.9px;top:560.77px" width="12" height="10" viewBox="0 0 12 10"><circle cx="5" cy="5" r="3.8" fill="#0058cc"/><path d="M8.6 3L11 5L8.6 7Z" fill="#0058cc"/></svg><div class="t" style="left:618px;top:562.83px;font-size:8.2px;line-height:8.2px;color:#d6d6d6;text-shadow:1px 1px 0 rgba(0,0,0,.75);">Value 3</div><svg class="abs" style="left:603.9px;top:579.48px" width="12" height="10" viewBox="0 0 12 10"><circle cx="5" cy="5" r="3.25" fill="#121212" stroke="#ff00d4" stroke-width="1.25"/><path d="M8.6 3L11 5L8.6 7Z" fill="#ff00d4"/></svg><div class="t" style="left:618px;top:581.54px;font-size:8.2px;line-height:8.2px;color:#d6d6d6;text-shadow:1px 1px 0 rgba(0,0,0,.75);">Key 4</div><div class="tb" style="left:642.2px;top:578.78px;width:27.3px;height:11.4px"></div><div class="t" style="left:642.2px;width:27.3px;text-align:center;top:581.01px;font-size:8.0px;line-height:8.0px;color:#d2d2d2">is_vip</div><svg class="abs" style="left:603.9px;top:598.19px" width="12" height="10" viewBox="0 0 12 10"><circle cx="5" cy="5" r="3.8" fill="#0058cc"/><path d="M8.6 3L11 5L8.6 7Z" fill="#0058cc"/></svg><div class="t" style="left:618px;top:600.25px;font-size:8.2px;line-height:8.2px;color:#d6d6d6;text-shadow:1px 1px 0 rgba(0,0,0,.75);">Value 4</div><svg class="abs" style="left:603.9px;top:616.9px" width="12" height="10" viewBox="0 0 12 10"><circle cx="5" cy="5" r="3.25" fill="#121212" stroke="#ff00d4" stroke-width="1.25"/><path d="M8.6 3L11 5L8.6 7Z" fill="#ff00d4"/></svg><div class="t" style="left:618px;top:618.96px;font-size:8.2px;line-height:8.2px;color:#d6d6d6;text-shadow:1px 1px 0 rgba(0,0,0,.75);">Key 5</div><div class="tb" style="left:642.2px;top:616.2px;width:26.3px;height:11.4px"></div><div class="t" style="left:642.2px;width:26.3px;text-align:center;top:618.43px;font-size:8.0px;line-height:8.0px;color:#d2d2d2">essay</div><svg class="abs" style="left:603.9px;top:635.61px" width="12" height="10" viewBox="0 0 12 10"><circle cx="5" cy="5" r="3.8" fill="#0058cc"/><path d="M8.6 3L11 5L8.6 7Z" fill="#0058cc"/></svg><div class="t" style="left:618px;top:637.67px;font-size:8.2px;line-height:8.2px;color:#d6d6d6;text-shadow:1px 1px 0 rgba(0,0,0,.75);">Value 5</div><div class="t" style="right:560.7px;top:431.66px;font-size:8.2px;line-height:8.2px;color:#d6d6d6;text-shadow:1px 1px 0 rgba(0,0,0,.75)">Map</div><svg class="abs" style="left:725px;top:429.8px" width="10" height="10" viewBox="0 0 10 10"><rect x="0.3" y="0.3" width="2.4" height="2.4" fill="#ff00d4"/><rect x="3.3" y="0.3" width="6" height="2.4" fill="#0a6cf0"/><rect x="0.3" y="3.5" width="2.4" height="2.4" fill="#ff00d4"/><rect x="3.3" y="3.5" width="6" height="2.4" fill="#0a6cf0"/><rect x="0.3" y="6.7" width="2.4" height="2.4" fill="#ff00d4"/><rect x="3.3" y="6.7" width="6" height="2.4" fill="#0a6cf0"/></svg><div class="t" style="right:557.6px;top:454.46px;font-size:8.2px;line-height:8.2px;color:#d6d6d6;text-shadow:1px 1px 0 rgba(0,0,0,.75)">Add pin</div><svg class="abs" style="left:727.8px;top:453.5px" width="8" height="8" viewBox="0 0 8 8"><path d="M3.6 0.3V7.1M0.3 3.7H6.9" stroke="#fff" stroke-width="1.8"/></svg></body></html>
